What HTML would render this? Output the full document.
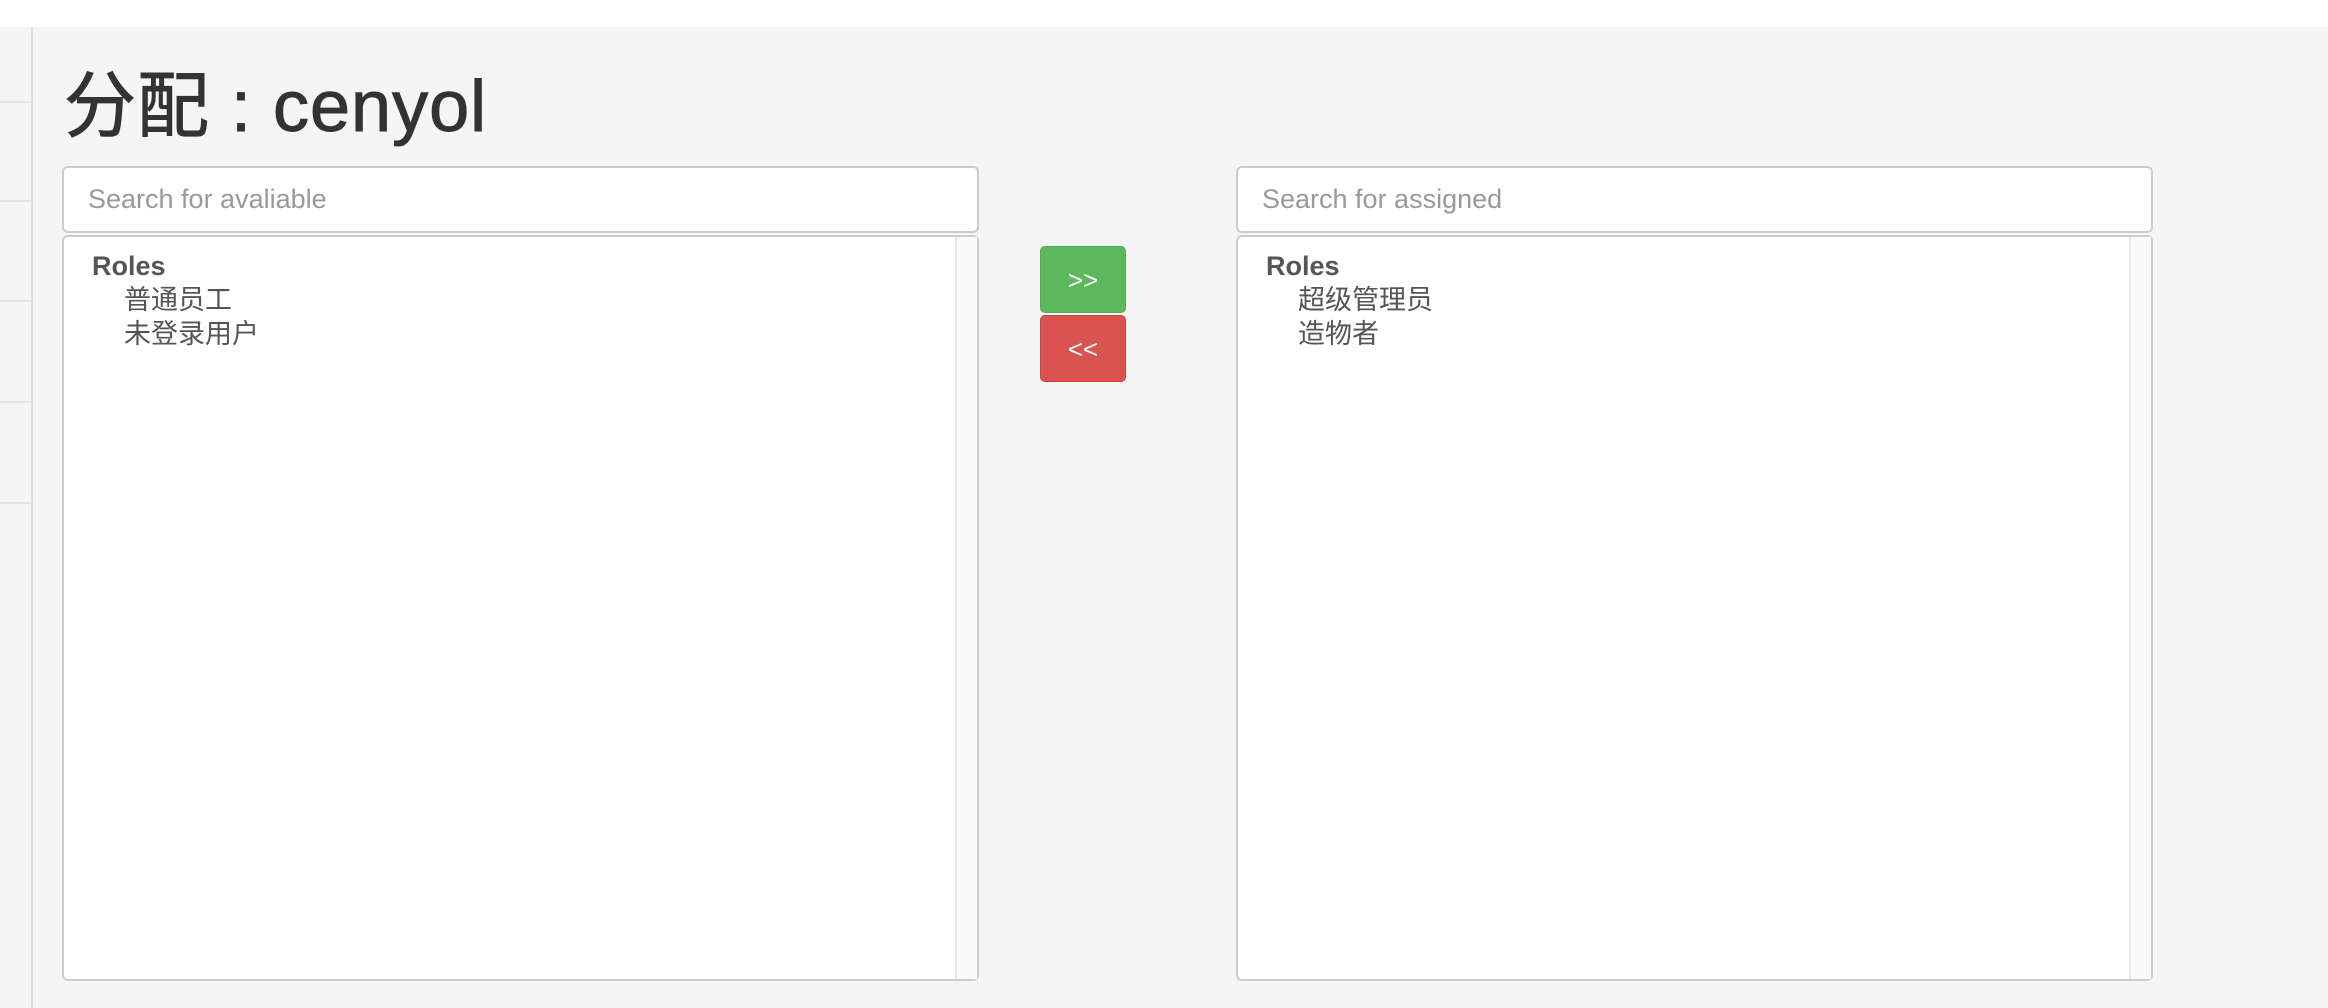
<!DOCTYPE html>
<html><head><meta charset="utf-8"><style>
body{margin:0;width:2328px;height:1008px;background:#f4f5f4;position:relative;overflow:hidden;font-family:"Liberation Sans","Noto Sans CJK SC",sans-serif;color:#333}
.top{position:absolute;left:0;top:0;width:2328px;height:27px;background:#fff}
.side{position:absolute;left:0;top:27px;width:31px;height:981px;border-right:2px solid #ddd;background:#f4f5f4}
.side i{position:absolute;left:0;width:31px;height:2px;background:#e4e4e4}
h1{position:absolute;left:64px;top:62px;margin:0;font-size:72px;font-weight:normal;line-height:90px;color:#333;letter-spacing:1px;-webkit-text-stroke:1px #333}
.inp{position:absolute;height:67px;background:#fff;border:2px solid #ccc;border-radius:6px;box-sizing:border-box;font-size:27px;color:#999;line-height:63px;padding-left:24px}
.box{position:absolute;height:746px;background:#fff;border:2px solid #ccc;border-radius:6px;box-sizing:border-box;font-size:27px;color:#555}
.box .sb{position:absolute;right:0;top:0;bottom:0;width:20px;border-left:2px solid #e8e8e8;background:#fafafa}
.box .g{position:absolute;left:28px;top:12px;font-weight:bold;line-height:34px}
.box .it{padding-left:32px;font-weight:normal}
.btn{position:absolute;left:1040px;width:86px;height:67px;border-radius:5px;color:#fff;font-size:26px;text-align:center;line-height:67px;box-sizing:border-box}
</style></head><body>
<div class="top"></div>
<div class="side"><i style="top:74px"></i><i style="top:173px"></i><i style="top:273px"></i><i style="top:374px"></i><i style="top:475px"></i></div>
<h1>分配 : cenyol</h1>
<div class="inp" style="left:62px;top:166px;width:917px">Search for avaliable</div>
<div class="box" style="left:62px;top:235px;width:917px"><div class="sb"></div><div class="g">Roles<div class="it">普通员工</div><div class="it">未登录用户</div></div></div>
<div class="btn" style="top:246px;background:#5cb85c;border:1px solid #4cae4c">&gt;&gt;</div>
<div class="btn" style="top:315px;background:#d9534f;border:1px solid #d43f3a">&lt;&lt;</div>
<div class="inp" style="left:1236px;top:166px;width:917px">Search for assigned</div>
<div class="box" style="left:1236px;top:235px;width:917px"><div class="sb"></div><div class="g">Roles<div class="it">超级管理员</div><div class="it">造物者</div></div></div>
</body></html>
